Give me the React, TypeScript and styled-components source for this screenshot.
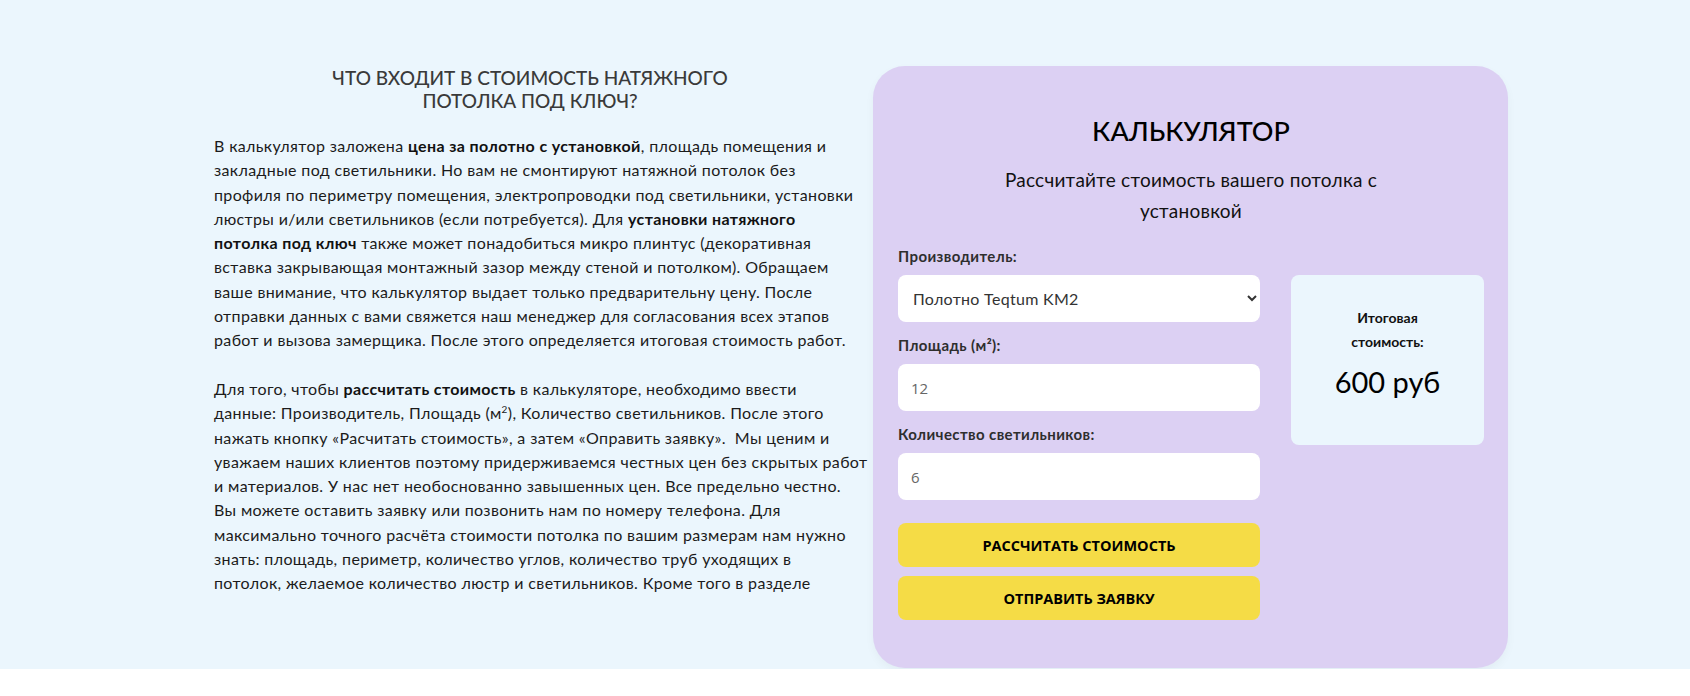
import styled, { createGlobalStyle } from 'styled-components';

const GlobalStyle = createGlobalStyle`
  body {
    margin: 0;
    background: #ffffff;
  }
  * {
    box-sizing: border-box;
  }
`;

const Section = styled.section`
  height: 669px;
  padding-top: 66px;
  background: #ebf6fd;
`;

const Container = styled.div`
  display: flex;
  align-items: flex-start;
  gap: 27px;
  padding-left: 214px;
`;

const InfoColumn = styled.div`
  width: 632px;
`;

const InfoTitle = styled.h2`
  max-width: 420px;
  margin: 0 auto 22px;
  font-family: Lato, 'Noto Sans', sans-serif;
  font-weight: 500;
  font-size: 19px;
  line-height: 23px;
  text-align: center;
  text-transform: uppercase;
  color: #3a3a3a;
`;

const Paragraph = styled.p`
  margin: 0 0 24.3px;
  font-family: Lato, 'Noto Sans', sans-serif;
  font-size: 16px;
  line-height: 24.3px;
  letter-spacing: 0.36px;
  white-space: nowrap;
  color: #1b1b1b;

  b {
    font-weight: 700;
    color: #111111;
  }

  sup {
    font-size: 10px;
    line-height: 0;
  }
`;

const Card = styled.div`
  width: 635px;
  height: 602px;
  padding: 47px 24px 0 25px;
  border-radius: 32px;
  background: #dcd0f3;
  box-shadow: 0 4px 10px rgba(0, 0, 0, 0.04);
`;

const CardTitle = styled.h3`
  margin: 0;
  font-family: Lato, 'Noto Sans', sans-serif;
  font-weight: 500;
  font-size: 27px;
  line-height: 36px;
  text-align: center;
  color: #000000;
`;

const CardSubtitle = styled.p`
  max-width: 400px;
  margin: 15px auto 20px;
  font-family: Lato, 'Noto Sans', sans-serif;
  font-size: 19px;
  line-height: 31px;
  letter-spacing: 0.25px;
  text-align: center;
  color: #111111;
`;

const FormRow = styled.div`
  display: flex;
  align-items: flex-start;
  gap: 31px;
`;

const FormColumn = styled.form`
  display: flex;
  flex-direction: column;
  width: 362px;
`;

const Label = styled.label`
  margin-bottom: 9px;
  font-family: Lato, 'Noto Sans', sans-serif;
  font-weight: 700;
  font-size: 15px;
  line-height: 20px;
  letter-spacing: 0.4px;
  color: #2e2e2e;
`;

const Select = styled.select`
  height: 47px;
  margin-bottom: 13px;
  padding: 0 6px 0 11px;
  border: none;
  border-radius: 8px;
  background: #ffffff;
  font-family: Lato, 'Noto Sans', sans-serif;
  font-size: 16px;
  letter-spacing: 0.3px;
  color: #333333;
  outline: none;
`;

const Input = styled.input`
  height: 47px;
  margin-bottom: 13px;
  padding: 0 13px;
  border: none;
  border-radius: 8px;
  background: #ffffff;
  font-family: 'Open Sans', sans-serif;
  font-size: 15px;
  color: #666666;
  outline: none;
`;

const Button = styled.button<{ $first?: boolean }>`
  height: 44px;
  margin-top: ${(props) => (props.$first ? '10px' : '9px')};
  border: none;
  border-radius: 8px;
  background: #f5dc46;
  font-family: 'Open Sans', sans-serif;
  font-weight: 700;
  font-size: 14.5px;
  text-transform: uppercase;
  color: #000000;
  cursor: pointer;
`;

const ResultBox = styled.div`
  width: 193px;
  height: 170px;
  margin-top: 29px;
  padding: 31px 12px 0;
  border-radius: 8px;
  background: #ebf6fd;
  text-align: center;
`;

const ResultLabel = styled.div`
  max-width: 110px;
  margin: 0 auto;
  font-family: Lato, 'Noto Sans', sans-serif;
  font-weight: 700;
  font-size: 14px;
  line-height: 24px;
  color: #111111;
`;

const ResultValue = styled.div`
  margin-top: 8px;
  font-family: Lato, 'Noto Sans', sans-serif;
  font-size: 29px;
  line-height: 40px;
  color: #000000;
`;

function App() {
  return (
    <>
      <GlobalStyle />
      <Section>
        <Container>
          <InfoColumn>
            <InfoTitle>Что входит в стоимость натяжного потолка под ключ?</InfoTitle>
            <Paragraph>
              В калькулятор заложена <b>цена за полотно с установкой</b>, площадь помещения и
              <br />
              закладные под светильники. Но вам не смонтируют натяжной потолок без
              <br />
              профиля по периметру помещения, электропроводки под светильники, установки
              <br />
              люстры и/или светильников (если потребуется). Для <b>установки натяжного</b>
              <br />
              <b>потолка под ключ</b> также может понадобиться микро плинтус (декоративная
              <br />
              вставка закрывающая монтажный зазор между стеной и потолком). Обращаем
              <br />
              ваше внимание, что калькулятор выдает только предварительну цену. После
              <br />
              отправки данных с вами свяжется наш менеджер для согласования всех этапов
              <br />
              работ и вызова замерщика. После этого определяется итоговая стоимость работ.
            </Paragraph>
            <Paragraph>
              Для того, чтобы <b>рассчитать стоимость</b> в калькуляторе, необходимо ввести
              <br />
              данные: Производитель, Площадь (м<sup>2</sup>), Количество светильников. После этого
              <br />
              нажать кнопку «Расчитать стоимость», а затем «Оправить заявку».&nbsp; Мы ценим и
              <br />
              уважаем наших клиентов поэтому придерживаемся честных цен без скрытых работ
              <br />
              и материалов. У нас нет необоснованно завышенных цен. Все предельно честно.
              <br />
              Вы можете оставить заявку или позвонить нам по номеру телефона. Для
              <br />
              максимально точного расчёта стоимости потолка по вашим размерам нам нужно
              <br />
              знать: площадь, периметр, количество углов, количество труб уходящих в
              <br />
              потолок, желаемое количество люстр и светильников. Кроме того в разделе
            </Paragraph>
          </InfoColumn>
          <Card>
            <CardTitle>КАЛЬКУЛЯТОР</CardTitle>
            <CardSubtitle>Рассчитайте стоимость вашего потолка с установкой</CardSubtitle>
            <FormRow>
              <FormColumn onSubmit={(e) => e.preventDefault()}>
                <Label htmlFor="maker">Производитель:</Label>
                <Select id="maker" defaultValue="km2">
                  <option value="km2">Полотно Teqtum KM2</option>
                  <option value="msd">Полотно MSD</option>
                </Select>
                <Label htmlFor="area">Площадь (м²):</Label>
                <Input id="area" type="text" defaultValue="12" />
                <Label htmlFor="lights">Количество светильников:</Label>
                <Input id="lights" type="text" defaultValue="6" />
                <Button type="button" $first>
                  Рассчитать стоимость
                </Button>
                <Button type="submit">Отправить заявку</Button>
              </FormColumn>
              <ResultBox>
                <ResultLabel>Итоговая стоимость:</ResultLabel>
                <ResultValue>600 руб</ResultValue>
              </ResultBox>
            </FormRow>
          </Card>
        </Container>
      </Section>
    </>
  );
}

export default App;
